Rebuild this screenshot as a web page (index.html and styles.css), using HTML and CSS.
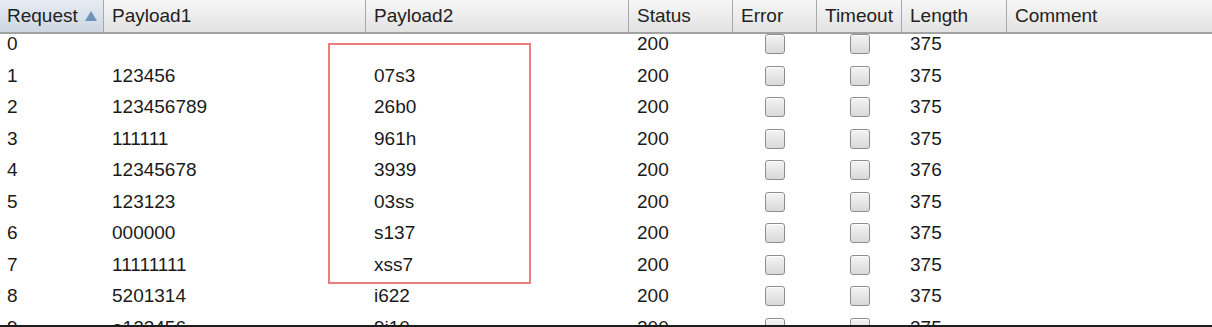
FILE: index.html
```html
<!DOCTYPE html>
<html>
<head>
<meta charset="utf-8">
<link rel="stylesheet" href="styles.css">
</head>
<body>
<div class="table">
  <div class="head row-grid">
    <div class="hcell sorted">Request <svg class="arrow" width="12" height="10" viewBox="0 0 12 10"><polygon points="6,0 12,10 0,10" fill="#6d93ba"/></svg></div>
    <div class="hcell">Payload1</div>
    <div class="hcell">Payload2</div>
    <div class="hcell">Status</div>
    <div class="hcell">Error</div>
    <div class="hcell">Timeout</div>
    <div class="hcell">Length</div>
    <div class="hcell last">Comment</div>
  </div>
  <div class="viewport">
    <div class="rows">
      <div class="row row-grid"><div class="cell first">0</div><div class="cell"></div><div class="cell"></div><div class="cell">200</div><div class="cell chk"><span class="box"></span></div><div class="cell chk"><span class="box"></span></div><div class="cell">375</div><div class="cell"></div></div>
      <div class="row row-grid"><div class="cell first">1</div><div class="cell">123456</div><div class="cell">07s3</div><div class="cell">200</div><div class="cell chk"><span class="box"></span></div><div class="cell chk"><span class="box"></span></div><div class="cell">375</div><div class="cell"></div></div>
      <div class="row row-grid"><div class="cell first">2</div><div class="cell">123456789</div><div class="cell">26b0</div><div class="cell">200</div><div class="cell chk"><span class="box"></span></div><div class="cell chk"><span class="box"></span></div><div class="cell">375</div><div class="cell"></div></div>
      <div class="row row-grid"><div class="cell first">3</div><div class="cell">111111</div><div class="cell">961h</div><div class="cell">200</div><div class="cell chk"><span class="box"></span></div><div class="cell chk"><span class="box"></span></div><div class="cell">375</div><div class="cell"></div></div>
      <div class="row row-grid"><div class="cell first">4</div><div class="cell">12345678</div><div class="cell">3939</div><div class="cell">200</div><div class="cell chk"><span class="box"></span></div><div class="cell chk"><span class="box"></span></div><div class="cell">376</div><div class="cell"></div></div>
      <div class="row row-grid"><div class="cell first">5</div><div class="cell">123123</div><div class="cell">03ss</div><div class="cell">200</div><div class="cell chk"><span class="box"></span></div><div class="cell chk"><span class="box"></span></div><div class="cell">375</div><div class="cell"></div></div>
      <div class="row row-grid"><div class="cell first">6</div><div class="cell">000000</div><div class="cell">s137</div><div class="cell">200</div><div class="cell chk"><span class="box"></span></div><div class="cell chk"><span class="box"></span></div><div class="cell">375</div><div class="cell"></div></div>
      <div class="row row-grid"><div class="cell first">7</div><div class="cell">11111111</div><div class="cell">xss7</div><div class="cell">200</div><div class="cell chk"><span class="box"></span></div><div class="cell chk"><span class="box"></span></div><div class="cell">375</div><div class="cell"></div></div>
      <div class="row row-grid"><div class="cell first">8</div><div class="cell">5201314</div><div class="cell">i622</div><div class="cell">200</div><div class="cell chk"><span class="box"></span></div><div class="cell chk"><span class="box"></span></div><div class="cell">375</div><div class="cell"></div></div>
      <div class="row row-grid"><div class="cell first">9</div><div class="cell">a123456</div><div class="cell">9i10</div><div class="cell">200</div><div class="cell chk"><span class="box"></span></div><div class="cell chk"><span class="box"></span></div><div class="cell">375</div><div class="cell"></div></div>
    </div>
  </div>
  <div class="highlight"></div>
</div>
</body>
</html>
```
FILE: styles.css
```css
html, body {
  margin: 0;
  padding: 0;
  background: #ffffff;
}
body {
  width: 1212px;
  height: 327px;
  overflow: hidden;
  font-family: "Liberation Sans", Arial, sans-serif;
  font-size: 19px;
  color: #1a1a1a;
}
.table {
  position: relative;
  width: 1212px;
  height: 327px;
  display: flex;
  flex-direction: column;
}
.row-grid {
  display: grid;
  grid-template-columns: 104px 262px 263px 104px 84px 85px 105px 1fr;
}
.head {
  height: 32px;
  border-bottom: 2px solid #a3a3a3;
  background: linear-gradient(#f7f7f7, #e2e2e2);
  flex: none;
  position: relative;
  z-index: 2;
}
.hcell {
  display: flex;
  align-items: center;
  padding-left: 8px;
  border-right: 1px solid #a9a9a9;
  white-space: nowrap;
  color: #222;
}
.hcell.sorted {
  padding-left: 7px;
  background: linear-gradient(#e6ecf3, #cdd6e1);
}
.hcell.last {
  border-right: none;
}
.arrow {
  margin-left: 7px;
  margin-bottom: 1px;
}
.viewport {
  height: 291px;
  overflow: hidden;
  border-bottom: 2px solid #1c1c1c;
  flex: none;
}
.rows {
  margin-top: -5.75px;
}
.row {
  height: 31.5px;
}
.cell {
  display: flex;
  align-items: center;
  padding-left: 8px;
  white-space: nowrap;
}
.cell.first {
  padding-left: 7px;
}
.cell.chk {
  padding-left: 0;
  justify-content: center;
}
.box {
  width: 18px;
  height: 18px;
  border: 1px solid #8d8d8d;
  border-radius: 3px;
  background: linear-gradient(#f4f4f4, #d9d9d9);
  box-shadow: inset 0 1px 0 #ffffff;
}
.highlight {
  position: absolute;
  left: 328px;
  top: 43px;
  width: 199px;
  height: 237px;
  border: 2px solid #ec7d7d;
  z-index: 3;
}
```
